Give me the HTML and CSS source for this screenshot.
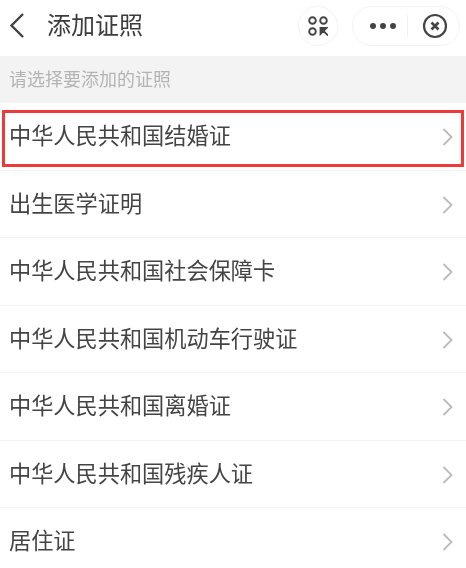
FILE: index.html
```html
<!DOCTYPE html>
<html lang="zh">
<head>
<meta charset="utf-8">
<title>添加证照</title>
<link rel="stylesheet" href="styles.css">
</head>
<body>
<header class="nav">
  <svg class="back" width="16" height="28" viewBox="0 0 16 28"><path d="M14 2 2.500 13.500 14 25" fill="none" stroke="#444" stroke-width="2.400"/></svg>
  <h1 class="title">添加证照</h1>
  <div class="scan">
    <svg width="20" height="20" viewBox="0 0 20 20" fill="none" stroke="#444" stroke-width="1.900"><circle cx="4.500" cy="4.500" r="3.300"/><circle cx="15.500" cy="4.500" r="3.300"/><circle cx="4.500" cy="15.500" r="3.300"/><path d="M12.500 12h6l-6 6zM14 13.500l6 6" fill="#444" stroke-width="1.800"/></svg>
  </div>
  <div class="capsule">
    <div class="dots"><i></i><i></i><i></i></div>
    <span class="divider"></span>
    <svg width="28" height="28" viewBox="0 0 28 28" fill="none" stroke="#444"><circle cx="14" cy="14" r="11" stroke-width="2.200"/><path d="m10.500 10.500 7 7m0-7-7 7" stroke-width="2.600"/></svg>
  </div>
</header>
<div class="hint"><span class="hint-text">请选择要添加的证照</span></div>
<ul class="list">
  <li class="row selected"><span class="label">中华人民共和国结婚证</span><svg class="chev" width="11" height="20" viewBox="0 0 11 20"><path d="m1.500 2 8 8-8 8" fill="none" stroke="#bbb" stroke-width="1.800"/></svg></li>
  <li class="row"><span class="label">出生医学证明</span><svg class="chev" width="11" height="20" viewBox="0 0 11 20"><path d="m1.500 2 8 8-8 8" fill="none" stroke="#bbb" stroke-width="1.800"/></svg></li>
  <li class="row"><span class="label">中华人民共和国社会保障卡</span><svg class="chev" width="11" height="20" viewBox="0 0 11 20"><path d="m1.500 2 8 8-8 8" fill="none" stroke="#bbb" stroke-width="1.800"/></svg></li>
  <li class="row"><span class="label">中华人民共和国机动车行驶证</span><svg class="chev" width="11" height="20" viewBox="0 0 11 20"><path d="m1.500 2 8 8-8 8" fill="none" stroke="#bbb" stroke-width="1.800"/></svg></li>
  <li class="row"><span class="label">中华人民共和国离婚证</span><svg class="chev" width="11" height="20" viewBox="0 0 11 20"><path d="m1.500 2 8 8-8 8" fill="none" stroke="#bbb" stroke-width="1.800"/></svg></li>
  <li class="row"><span class="label">中华人民共和国残疾人证</span><svg class="chev" width="11" height="20" viewBox="0 0 11 20"><path d="m1.500 2 8 8-8 8" fill="none" stroke="#bbb" stroke-width="1.800"/></svg></li>
  <li class="row"><span class="label">居住证</span><svg class="chev" width="11" height="20" viewBox="0 0 11 20"><path d="m1.500 2 8 8-8 8" fill="none" stroke="#bbb" stroke-width="1.800"/></svg></li>
</ul>
</body>
</html>
```
FILE: styles.css
```css
*, *::after { box-sizing: border-box; }
html, body { margin: 0; height: 100%; overflow: hidden; }
body { background: #fff; font-family: "Noto Sans CJK SC", "Liberation Sans", sans-serif; color: #333; filter: blur(0.4px); }
.nav { height: 56px; display: flex; align-items: center; padding: 0 6px 0 9px; }
.back { flex: none; margin-bottom: 4px; }
.title { margin: 0 0 0 22px; font-size: 24px; font-weight: 400; color: #3c3c3c; flex: 1; line-height: 1; padding-bottom: 8px; }
.scan { width: 40px; height: 40px; border-radius: 50%; border: 1px solid #f2f2f2; display: flex; align-items: center; justify-content: center; margin-right: 14px; margin-bottom: 4px; }
.capsule { width: 108px; height: 40px; border-radius: 20px; border: 1px solid #f2f2f2; display: flex; align-items: center; padding: 0 10px 0 17px; margin-bottom: 4px; }
.dots { display: flex; gap: 4px; }
.dots i { width: 6px; height: 6px; border-radius: 50%; background: #444; }
.divider { width: 1px; height: 22px; background: #f0f0f0; margin: 0 auto 0 11px; }
.hint { height: 47px; background: #f3f3f3; color: #b4b4b4; font-size: 18px; display: flex; align-items: center; padding: 0 0 4px 9px; }
.list { margin: 0; padding: 0; list-style: none; }
.row { height: 67.5px; display: flex; align-items: center; justify-content: space-between; padding: 0 13px 0 9px; font-size: 22.200px; color: #444; border-bottom: 1px solid #f3f3f3; position: relative; }
.label { position: relative; top: -2px; }
.chev { position: relative; top: 1px; }
.selected::after { content: ""; position: absolute; left: 2px; right: 2px; top: 7px; height: 57px; border: 3px solid #f03a3a; }
```
